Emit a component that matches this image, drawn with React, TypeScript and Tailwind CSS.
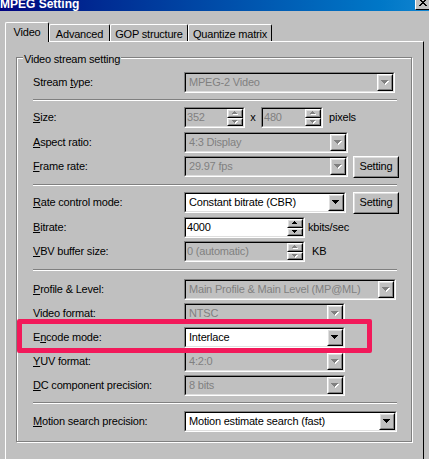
import type { ReactNode } from "react";

// classic 3d edges
function Raised({ className = "", children }: { className?: string; children?: ReactNode }) {
  return (
    <div className={`border border-t-white border-l-white border-r-black border-b-black ${className}`}>
      <div className="flex h-full w-full items-center justify-center border border-t-[#dfdfdf] border-l-[#dfdfdf] border-r-[#808080] border-b-[#808080] bg-[#c0c0c0]">
        {children}
      </div>
    </div>
  );
}

function Sunken({ className = "", white, children }: { className?: string; white?: boolean; children?: ReactNode }) {
  return (
    <div className={`border border-t-[#808080] border-l-[#808080] border-r-white border-b-white ${className}`}>
      <div
        className={`flex h-full w-full items-center border border-t-black border-l-black border-r-[#dfdfdf] border-b-[#dfdfdf] ${
          white ? "bg-white text-black" : "bg-[#c0c0c0] text-[#808080]"
        }`}
      >
        {children}
      </div>
    </div>
  );
}

function DownArrow({ disabled }: { disabled?: boolean }) {
  const d = "M0 0h7v1H0z M1 1h5v1H1z M2 2h3v1H2z M3 3h1v1H3z";
  return (
    <svg width="8" height="5" viewBox="0 0 8 5" shapeRendering="crispEdges">
      {disabled && <path d={d} fill="#fff" transform="translate(1 1)" />}
      <path d={d} fill={disabled ? "#808080" : "#000"} />
    </svg>
  );
}

function SpinArrow({ up, disabled }: { up?: boolean; disabled?: boolean }) {
  const d = up ? "M2 0h1v1H2z M1 1h3v1H1z M0 2h5v1H0z" : "M0 0h5v1H0z M1 1h3v1H1z M2 2h1v1H2z";
  return (
    <svg width="6" height="4" viewBox="0 0 6 4" shapeRendering="crispEdges">
      {disabled && <path d={d} fill="#fff" transform="translate(1 1)" />}
      <path d={d} fill={disabled ? "#808080" : "#000"} />
    </svg>
  );
}

function Combo({ value, className, disabled }: { value: string; className: string; disabled?: boolean }) {
  return (
    <Sunken white={!disabled} className={`h-[21px] ${className}`}>
      <span className="flex-1 truncate pl-[3px] leading-[13px]">{value}</span>
      <Raised className="h-full w-[16px]">
        <DownArrow disabled={disabled} />
      </Raised>
    </Sunken>
  );
}

function Spin({ value, className, disabled }: { value: string; className: string; disabled?: boolean }) {
  return (
    <Sunken white={!disabled} className={`h-[21px] ${className}`}>
      <span className="flex-1 truncate pl-[1px] leading-[13px]">{value}</span>
      <div className="flex h-full w-[16px] flex-col">
        <Raised className="flex-1">
          <SpinArrow up disabled={disabled} />
        </Raised>
        <Raised className="flex-1">
          <SpinArrow disabled={disabled} />
        </Raised>
      </div>
    </Sunken>
  );
}

function Label({ pre = "", u, post }: { pre?: string; u?: string; post: string }) {
  return (
    <div className="w-[151px] shrink-0 leading-[13px]">
      {pre}
      {u && <span className="underline underline-offset-[1px]">{u}</span>}
      {post}
    </div>
  );
}

function Row({ mt, children }: { mt: string; children: ReactNode }) {
  return <div className={`flex h-[21px] items-center ${mt}`}>{children}</div>;
}

function Sep({ mt }: { mt: string }) {
  return <div className={`h-[2px] w-[364px] border-t border-t-[#808080] border-b border-b-white ${mt}`} />;
}

function SettingButton() {
  return (
    <Raised className="h-[22px] w-[46px]">
      <span className="leading-[13px] text-black">Setting</span>
    </Raised>
  );
}

export default function App() {
  return (
    <div className="relative h-[459px] w-[429px] overflow-hidden bg-[#c0c0c0] font-['Liberation_Sans',Arial,sans-serif] text-[11px] tracking-[-0.2px] text-black">
      {/* Title bar, top cut off */}
      <div className="flex h-[11px] items-start overflow-hidden bg-gradient-to-r from-[#000080] to-[#1084d0]">
        <span className="text-[12px] font-bold leading-[9px] tracking-normal text-white">MPEG Setting</span>
        <div className="ml-auto flex h-[10px] w-[14px] items-start justify-center border-l border-l-white border-b border-b-black bg-[#c0c0c0]">
          <svg width="8" height="6" viewBox="0 1 8 6" shapeRendering="crispEdges">
            <path
              d="M0 0h2v1H0z M6 0h2v1H6z M1 1h2v1H1z M5 1h2v1H5z M2 2h4v1H2z M3 3h2v1H3z M2 4h4v1H2z M1 5h2v1H1z M5 5h2v1H5z M0 6h2v1H0z M6 6h2v1H6z"
              fill="#000"
            />
          </svg>
        </div>
      </div>

      {/* Tabs */}
      <div className="mt-[11px] flex h-[19px] items-end pl-[5px]">
        <div className="relative z-10 -mb-[1px] flex h-[20px] w-[44px] justify-center rounded-tl-[2px] rounded-tr-[2px] border-t border-l border-r border-t-white border-l-white border-r-black bg-[#c0c0c0] pt-[3px] leading-[13px]">
          Video
        </div>
        <div className="flex h-[17px] w-[61px] justify-center rounded-tl-[2px] rounded-tr-[2px] border-t border-l border-r border-t-white border-l-white border-r-black pt-[3px] leading-[13px]">
          Advanced
        </div>
        <div className="flex h-[17px] w-[78px] justify-center rounded-tl-[2px] rounded-tr-[2px] border-t border-l border-r border-t-white border-l-white border-r-black pt-[3px] leading-[13px]">
          GOP structure
        </div>
        <div className="flex h-[17px] w-[84px] justify-center rounded-tl-[2px] rounded-tr-[2px] border-t border-l border-r border-t-white border-l-white border-r-black pt-[3px] leading-[13px]">
          Quantize matrix
        </div>
      </div>

      {/* Tab page */}
      <div className="ml-[5px] h-[430px] w-[419px] border-t border-l border-r border-t-white border-l-white border-r-black">
        <div className="relative ml-[10px] mt-[15px] h-[385px] w-[396px] border border-[#808080] pl-[16px] pt-[14px] shadow-[inset_1px_1px_0_#fff,1px_1px_0_#fff]">
          <span className="absolute -top-[5px] left-[6px] bg-[#c0c0c0] px-[1px] leading-[13px]">Video stream setting</span>

          <Row mt="mt-0">
            <Label pre="Stream " u="t" post="ype:" />
            <Combo value="MPEG-2 Video" className="w-[211px]" disabled />
          </Row>
          <Sep mt="mt-[6px]" />
          <Row mt="mt-[6px]">
            <Label u="S" post="ize:" />
            <Spin value="352" className="w-[61px]" disabled />
            <span className="w-[16px] text-center leading-[13px]">x</span>
            <Spin value="480" className="w-[62px]" disabled />
            <span className="ml-[6px] leading-[13px]">pixels</span>
          </Row>
          <Row mt="mt-[4px]">
            <Label u="A" post="spect ratio:" />
            <Combo value="4:3 Display" className="w-[164px]" disabled />
          </Row>
          <Row mt="mt-[3px]">
            <Label u="F" post="rame rate:" />
            <Combo value="29.97 fps" className="w-[164px]" disabled />
            <div className="ml-[5px]">
              <SettingButton />
            </div>
          </Row>
          <Sep mt="mt-[7px]" />
          <Row mt="mt-[6px]">
            <Label u="R" post="ate control mode:" />
            <Combo value="Constant bitrate (CBR)" className="w-[162px]" />
            <div className="ml-[7px]">
              <SettingButton />
            </div>
          </Row>
          <Row mt="mt-[4px]">
            <Label u="B" post="itrate:" />
            <Spin value="4000" className="w-[121px]" />
            <span className="ml-[3px] leading-[13px]">kbits/sec</span>
          </Row>
          <Row mt="mt-[3px]">
            <Label u="V" post="BV buffer size:" />
            <Spin value="0 (automatic)" className="w-[121px]" disabled />
            <span className="ml-[7px] leading-[13px]">KB</span>
          </Row>
          <Sep mt="mt-[7px]" />
          <Row mt="mt-[8px]">
            <Label u="P" post="rofile & Level:" />
            <Combo value="Main Profile & Main Level (MP@ML)" className="w-[212px]" disabled />
          </Row>
          <Row mt="mt-[3px]">
            <Label post="Video format:" />
            <Combo value="NTSC" className="w-[161px]" disabled />
          </Row>
          <Row mt="mt-[3px]">
            <Label pre="E" u="n" post="code mode:" />
            <Combo value="Interlace" className="w-[161px]" />
          </Row>
          <Row mt="mt-[3px]">
            <Label u="Y" post="UV format:" />
            <Combo value="4:2:0" className="w-[161px]" disabled />
          </Row>
          <Row mt="mt-[3px]">
            <Label u="D" post="C component precision:" />
            <Combo value="8 bits" className="w-[161px]" disabled />
          </Row>
          <Sep mt="mt-[6px]" />
          <Row mt="mt-[7px]">
            <Label u="M" post="otion search precision:" />
            <Combo value="Motion estimate search (fast)" className="w-[213px]" />
          </Row>
        </div>
      </div>

      {/* hand drawn highlight */}
      <div className="pointer-events-none absolute left-[17px] top-[319px] h-[34px] w-[355px] rounded-[2px] border-[5px] border-[#f2195a]" />
    </div>
  );
}
